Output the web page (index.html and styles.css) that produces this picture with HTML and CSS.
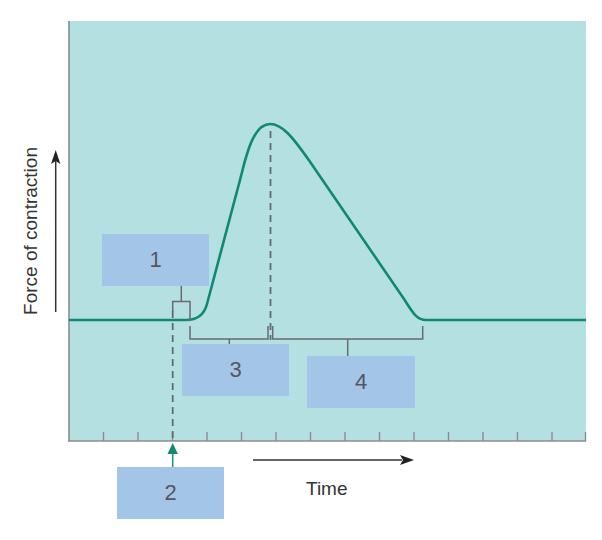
FILE: index.html
```html
<!DOCTYPE html>
<html lang="en">
<head>
<meta charset="utf-8">
<title>Muscle twitch</title>
<link rel="stylesheet" href="styles.css">
</head>
<body>
<div class="figure">
  <svg class="canvas" width="602" height="540" viewBox="0 0 602 540" xmlns="http://www.w3.org/2000/svg">
    <rect class="plot-bg" x="69" y="21" width="517" height="420"/>
    <!-- axes -->
    <line class="axis" x1="69" y1="21" x2="69" y2="441.5"/>
    <line class="axis" x1="68.3" y1="441" x2="586" y2="441"/>
    <g class="ticks">
      <line x1="103.5" y1="432" x2="103.5" y2="441"/>
      <line x1="138" y1="432" x2="138" y2="441"/>
      <line x1="172.5" y1="432" x2="172.5" y2="441"/>
      <line x1="207" y1="432" x2="207" y2="441"/>
      <line x1="241.5" y1="432" x2="241.5" y2="441"/>
      <line x1="276" y1="432" x2="276" y2="441"/>
      <line x1="310.5" y1="432" x2="310.5" y2="441"/>
      <line x1="345" y1="432" x2="345" y2="441"/>
      <line x1="379.5" y1="432" x2="379.5" y2="441"/>
      <line x1="414" y1="432" x2="414" y2="441"/>
      <line x1="448.5" y1="432" x2="448.5" y2="441"/>
      <line x1="483" y1="432" x2="483" y2="441"/>
      <line x1="517.5" y1="432" x2="517.5" y2="441"/>
      <line x1="552" y1="432" x2="552" y2="441"/>
      <line x1="585.5" y1="432" x2="585.5" y2="441"/>
    </g>
    <!-- dashed guides -->
    <line class="dash" x1="270.5" y1="131" x2="270.5" y2="340"/>
    <line class="dash" x1="172.7" y1="311" x2="172.7" y2="441"/>
    <!-- twitch curve -->
    <path class="curve" d="M69,320 L186,320 C196,320 204,315.3 207,304 L240,180 C245,161 252,124 270,124 C282,124 292,136 310,161.7 L404,299 C412,311 416,320 426,320 L586,320"/>
    <!-- brackets -->
    <g class="bracket">
      <path d="M172.7,312 L172.7,301.5 L190,301.5 L190,321"/>
      <line x1="181.3" y1="286" x2="181.3" y2="301.5"/>
      <path d="M190,326 L190,339 L268,339 L268,326"/>
      <line x1="229.3" y1="339" x2="229.3" y2="344"/>
      <path d="M272.7,326 L272.7,339 L422.7,339 L422.7,326"/>
      <line x1="347.7" y1="339" x2="347.7" y2="356"/>
    </g>
    <!-- stimulus arrow -->
    <line class="stim" x1="172.7" y1="452" x2="172.7" y2="467"/>
    <polygon class="stim-head" points="172.7,443 167.5,454 177.9,454"/>
    <!-- time arrow -->
    <line class="arrow" x1="253" y1="460" x2="402" y2="460"/>
    <polygon class="arrow-head" points="414,460 400,455 403,460 400,465"/>
    <!-- force arrow -->
    <line class="arrow" x1="55.7" y1="312" x2="55.7" y2="160"/>
    <polygon class="arrow-head" points="55.7,150 51,164 55.7,161 60.4,164"/>
    <text class="axis-label" transform="translate(37,231) rotate(-90)" text-anchor="middle">Force of contraction</text>
    <text class="axis-label" x="306" y="495">Time</text>
  </svg>
  <div class="tag tag-1">1</div>
  <div class="tag tag-3">3</div>
  <div class="tag tag-4">4</div>
  <div class="tag tag-2">2</div>
</div>
</body>
</html>
```

FILE: styles.css
```css
html, body {
  margin: 0;
  padding: 0;
  background: #ffffff;
}

.figure {
  position: relative;
  width: 602px;
  height: 540px;
  font-family: "Liberation Sans", Arial, sans-serif;
  overflow: hidden;
}

.canvas {
  display: block;
}

.plot-bg {
  fill: #b4e0e2;
}

.axis {
  stroke: #8c8c8c;
  stroke-width: 1.6;
}

.ticks line {
  stroke: #8c8c8c;
  stroke-width: 1.4;
}

.dash {
  stroke: #626a72;
  stroke-width: 1.8;
  stroke-dasharray: 7 5;
}

.curve {
  fill: none;
  stroke: #0f8a6e;
  stroke-width: 2.6;
  stroke-linejoin: round;
}

.bracket path,
.bracket line {
  fill: none;
  stroke: #6a6a72;
  stroke-width: 1.5;
}

.stim {
  stroke: #1a9a7a;
  stroke-width: 1.6;
}

.stim-head {
  fill: #0f8a6e;
}

.arrow {
  stroke: #333333;
  stroke-width: 1.5;
}

.arrow-head {
  fill: #222222;
}

.axis-label {
  font-family: "Liberation Sans", Arial, sans-serif;
  font-size: 19px;
  fill: #333333;
}

.tag {
  position: absolute;
  width: 107px;
  height: 52px;
  background: #a2c5e8;
  color: #555560;
  font-size: 22px;
  display: flex;
  align-items: center;
  justify-content: center;
}

.tag-1 { left: 102px; top: 234px; }
.tag-3 { left: 182px; top: 344px; }
.tag-4 { left: 307px; top: 356px; width: 108px; }
.tag-2 { left: 117px; top: 467px; }
```
